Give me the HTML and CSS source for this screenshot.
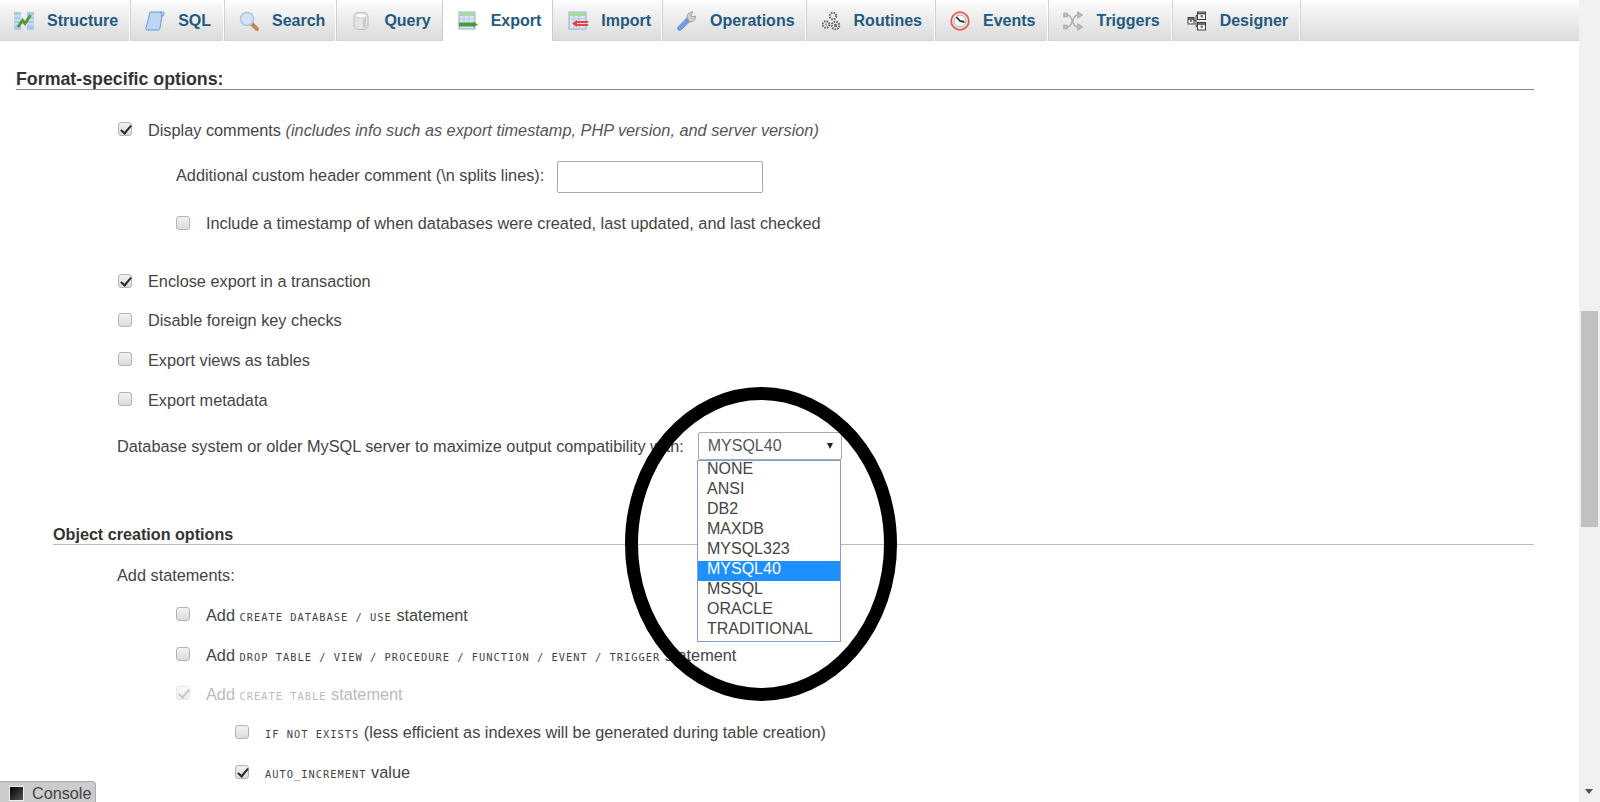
FILE: index.html
```html
<!DOCTYPE html>
<html lang="en">
<head>
<meta charset="utf-8">
<title>Export</title>
<link rel="stylesheet" href="styles.css">
</head>
<body>
<div class="page">
  <main class="main">
    <nav class="tabs">
      <a class="tab t-structure"><svg class="ico" viewBox="0 0 20 20"><rect x="0" y="1" width="7" height="18" fill="#a9c8ea"/><rect x="13" y="1" width="7" height="18" fill="#a9c8ea"/><path d="M0 5h7M0 9h7M0 13h7M13 5h7M13 9h7M13 13h7" stroke="#eef4fb"/><path d="M4 16 8.500 9.500l2.500 3L16.500 4" fill="none" stroke="#4c9a3c" stroke-width="3"/></svg>Structure</a>
      <a class="tab t-sql"><svg class="ico" viewBox="0 0 20 20"><path d="M5 1h13c1.500 0 1.500 3 0 4h-1l-2 12c-.3 1.500-1 2-2 2H2C.5 19 .5 16 1.500 15.500Z" fill="#bcd5f2" stroke="#6a98cf"/><path d="M15 1c1.500 0 2 2 1.500 4H18" fill="none" stroke="#6a98cf"/></svg>SQL</a>
      <a class="tab t-search"><svg class="ico" viewBox="0 0 20 20"><path d="m12.500 12.500 5.500 5.500" stroke="#c08a50" stroke-width="4" stroke-linecap="round"/><circle cx="8" cy="8" r="6.500" fill="#d3e3f6" stroke="#a9c4e6" stroke-width="1.500"/></svg>Search</a>
      <a class="tab t-query"><svg class="ico" viewBox="0 0 20 20"><rect x="3" y="1.500" width="14" height="17" rx="4.500" fill="#e5e5e5" stroke="#bdbdbd"/><ellipse cx="10" cy="4.500" rx="6" ry="2.500" fill="#f8f8f8" stroke="#cfcfcf"/><rect x="12" y="7" width="3" height="9.500" fill="#cbcbcb"/></svg>Query</a>
      <a class="tab t-export active"><svg class="ico" viewBox="0 0 20 20"><rect x="1" y="1" width="16" height="17" fill="#dbe6f4" stroke="#8fadd2"/><rect x="2" y="2" width="14" height="3" fill="#a6dc92"/><path d="M2 8h14M6 5v8M11 5v8" stroke="#b5cae3"/><rect x="1" y="11.500" width="15" height="4" fill="#4c9a3c"/><path d="m15 10.500 5 3-5 3z" fill="#4c9a3c"/></svg>Export</a>
      <a class="tab t-import"><svg class="ico" viewBox="0 0 20 20"><rect x="1" y="1" width="17" height="17" fill="#dbe6f4" stroke="#8fadd2"/><rect x="2" y="2" width="15" height="3" fill="#a6dc92"/><path d="M2 8h15M6 5v12M11 5v12" stroke="#b5cae3"/><rect x="8" y="10" width="12" height="2" fill="#e8403a"/><rect x="8" y="13" width="12" height="2" fill="#e8403a"/><path d="m4 12.500 5-3.500v7z" fill="#e8403a"/></svg>Import</a>
      <a class="tab t-operations"><svg class="ico" viewBox="0 0 20 20"><path d="M1 16 10 6.500l3.500 3.500L4 19c-2 1.500-4.500-.5-3-3Z" fill="#6f9fe2" stroke="#4f7fc0" stroke-width=".5"/><path d="M10.500 8c-1.500-3.500 1.500-7.500 5.500-7l-2 3 1 2 3.500-1c.5 4-3.500 7-6.500 5.500Z" fill="#cdcdcd" stroke="#909090" stroke-width=".8"/></svg>Operations</a>
      <a class="tab t-routines"><svg class="ico" viewBox="0 0 20 20" fill="none" stroke="#6a6a6a"><circle cx="12" cy="5" r="3.300" stroke-dasharray="1.600 1" stroke-width="2"/><circle cx="5" cy="13.500" r="3.300" stroke-dasharray="1.600 1" stroke-width="2"/><circle cx="14.500" cy="14.500" r="3.800" stroke-dasharray="1.600 1" stroke-width="2"/><rect x="13" y="13" width="3" height="3" fill="#777" stroke="none"/><rect x="4" y="12.500" width="2" height="2" fill="#999" stroke="none"/></svg>Routines</a>
      <a class="tab t-events"><svg class="ico" viewBox="0 0 20 20"><circle cx="10" cy="10" r="8.800" fill="#f4eeee" stroke="#e8585a" stroke-width="1.800"/><circle cx="10" cy="10" r="6" fill="#fff" stroke="#a8a8a8"/><path d="M6.500 6 10 10l4.500 1" fill="none" stroke="#333" stroke-width="1.800"/></svg>Events</a>
      <a class="tab t-triggers"><svg class="ico" viewBox="0 0 20 20" fill="none" stroke="#b0b0b0" stroke-width="1.600"><path d="M1 4h4c4 0 5 12 9 12h1M1 16h4c4 0 5-12 9-12h1"/><path d="m15 1.500 4 2.500-4 2.500zM15 13.500l4 2.500-4 2.500z" fill="#d4d4d4"/><rect x="1" y="2.500" width="3" height="3" fill="#d4d4d4"/><rect x="1" y="14.500" width="3" height="3" fill="#d4d4d4"/></svg>Triggers</a>
      <a class="tab t-designer"><svg class="ico" viewBox="0 0 20 20" fill="#f4f4f4" stroke="#3f3f3f"><rect x="10.500" y="1" width="8" height="7.500"/><rect x="10.500" y="11.500" width="8" height="7.500"/><rect x="1" y="6.500" width="6" height="6.500"/><path d="M7 9.500h2V4.500h1.500M9 9.500v6h1.500" fill="none"/><path d="M10.500 2.500h8M10.500 13h8M1 8h6" stroke-width="1.500"/><rect x="13.500" y="4" width="2.500" height="2.500" fill="#6d87a8" stroke="none"/><rect x="13.500" y="14.500" width="2.500" height="2.500" fill="#6d87a8" stroke="none"/><rect x="3" y="9" width="2" height="2" fill="#6d87a8" stroke="none"/></svg>Designer</a>
    </nav>

    <section class="content">
      <h2 class="heading">Format-specific options:</h2>

      <div class="opts">
        <label class="row r1"><input type="checkbox" checked><span>Display comments <em>(includes info such as export timestamp, PHP version, and server version)</em></span></label>
        <div class="row r2 lvl1"><span>Additional custom header comment (\n splits lines):</span><input class="text" type="text"></div>
        <label class="row r3 lvl1"><input type="checkbox"><span>Include a timestamp of when databases were created, last updated, and last checked</span></label>
        <label class="row r4"><input type="checkbox" checked><span>Enclose export in a transaction</span></label>
        <label class="row r5"><input type="checkbox"><span>Disable foreign key checks</span></label>
        <label class="row r6"><input type="checkbox"><span>Export views as tables</span></label>
        <label class="row r7"><input type="checkbox"><span>Export metadata</span></label>
        <div class="row r8"><span class="compat">Database system or older MySQL server to maximize output compatibility with:</span><span class="select">MYSQL40<i class="caret"></i></span></div>
      </div>

      <h3 class="subheading">Object creation options</h3>

      <div class="opts">
        <div class="row r9"><span class="compat">Add statements:</span></div>
        <label class="row r10 lvl1"><input type="checkbox"><span>Add <code>CREATE DATABASE / USE</code> statement</span></label>
        <label class="row r11 lvl1"><input type="checkbox"><span>Add <code>DROP TABLE / VIEW / PROCEDURE / FUNCTION / EVENT / TRIGGER</code> statement</span></label>
        <label class="row r12 lvl1 off"><input type="checkbox" checked disabled><span>Add <code>CREATE TABLE</code> statement</span></label>
        <label class="row r13 lvl2"><input type="checkbox"><span><code>IF NOT EXISTS</code> (less efficient as indexes will be generated during table creation)</span></label>
        <label class="row r14 lvl2"><input type="checkbox" checked><span><code>AUTO_INCREMENT</code> value</span></label>
      </div>
    </section>
  </main>

  <aside class="scrollbar"><div class="thumb"></div><i class="down"></i></aside>
</div>

<ul class="dropdown">
  <li>NONE</li><li>ANSI</li><li>DB2</li><li>MAXDB</li><li>MYSQL323</li><li class="sel">MYSQL40</li><li>MSSQL</li><li>ORACLE</li><li>TRADITIONAL</li>
</ul>

<svg class="ring" viewBox="0 0 272 314"><ellipse cx="136" cy="157" rx="129.500" ry="150.500"/></svg>

<div class="console"><i class="console-ico"></i>Console</div>
</body>
</html>
```
FILE: styles.css
```css
* { box-sizing: border-box; }
html, body { margin: 0; height: 100%; overflow: hidden; background: #fff; }
body { font-family: "Liberation Sans", Arial, sans-serif; font-size: 16.3px; color: #444; position: relative; }

.page { display: flex; height: 802px; }
.main { flex: 1; min-width: 0; overflow: hidden; }

.tabs { display: flex; height: 41px; background: linear-gradient(#fff, #f3f3f3 25%, #dcdcdc); border-bottom: 1px solid #d4d4d4; }
.tab { display: flex; align-items: center; gap: 13px; height: 41px; padding: 0 11px 0 15px; font-weight: bold; font-size: 16px; color: #235a81; border-right: 1px solid #fff; box-shadow: 1px 0 0 #d0d0d0; white-space: nowrap; }
.tab.t-structure { padding: 0 11px 0 14px; }
.tab.t-sql { padding-right: 12px; }
.tab.t-search, .tab.t-import, .tab.t-operations { padding-right: 10px; }
.tab.t-routines, .tab.t-events { padding-right: 12px; }
.tab.active { margin-left: -1px; background: #fff; border-left: 1px solid #ccc; border-right: 1px solid #ccc; box-shadow: none; }
.ico { width: 20px; height: 20px; flex: none; filter: blur(.3px); }

.content { padding-left: 16px; }
.heading { margin: 26px 45px 0 0; height: 23px; padding-top: 2px; line-height: 21px; font-size: 17.8px; font-weight: bold; color: #333; border-bottom: 1px solid #888; }
.subheading { margin: 51px 45px 0 37px; height: 22px; line-height: 22px; font-size: 16.15px; font-weight: bold; color: #333; border-bottom: 1px solid #bbb; }

.opts { padding-left: 102px; }
.row { display: flex; align-items: center; height: 39.500px; white-space: nowrap; }
.row input[type=checkbox] { margin: 0 16px 0 0; }
.lvl1 { margin-left: 58px; }
.lvl2 { margin-left: 117px; }
.off { color: #bbb; }
em { color: #555; }
.compat { margin-left: -1px; }

.r1 { margin-top: 20px; height: 40px; }
.r2 { height: 51px; }
.r3 { height: 45px; }
.r4 { margin-top: 16px; height: 39px; }
.r5 { height: 39px; }
.r6, .r7 { height: 40px; }
.r8 { height: 52px; }
.r9 { margin-top: 11px; height: 39px; }
.r10, .r11 { height: 40px; }
.r12 { height: 38px; }
.r13 { height: 39px; }
.r14 { height: 41px; }

input[type=checkbox] { appearance: none; width: 14px; height: 14px; flex: none; position: relative; top: -1px; border: 1px solid #b4b4b4; border-radius: 3px; background: linear-gradient(#f2f2f2, #dcdcdc); }
input[type=checkbox]:checked::after { content: ""; position: absolute; left: 4px; top: 0; width: 4px; height: 9px; border: solid #2a2a2a; border-width: 0 2.500px 2.500px 0; transform: rotate(40deg); }
input[type=checkbox]:disabled { opacity: .45; border-color: #ccc; }
input[type=checkbox]:disabled:checked::after { border-color: #888; }

.text { width: 206px; height: 32px; margin: 3px 0 0 13px; border: 1px solid #aaa; border-radius: 2px; background: #fff; }

code { font-family: "DejaVu Sans Mono", monospace; font-size: 10.400px; letter-spacing: 1px; color: #444; }
.off code { color: #bbb; }

.select { position: relative; display: flex; align-items: center; width: 144px; height: 28px; margin-left: 14px; padding-left: 9px; border: 1px solid #a9a9a9; border-radius: 2px; color: #555; font-size: 16px; }
.caret { position: absolute; right: 8px; top: 10px; border: 3.500px solid transparent; border-top: 6px solid #222; border-bottom: 0; }

.dropdown { position: absolute; left: 697px; top: 460px; width: 144px; height: 182px; margin: 0; padding: 0; list-style: none; background: #fff; border: 1px solid #7e9fd8; font-size: 16px; color: #444; }
.dropdown li { height: 20px; line-height: 16px; padding-left: 9px; }
.dropdown .sel { background: #1e90ff; color: #fff; }

.ring { position: absolute; left: 625px; top: 387px; width: 272px; height: 314px; }
.ring ellipse { fill: none; stroke: #000; stroke-width: 13px; }

.scrollbar { position: relative; flex: none; width: 21px; background: #f1f1f1; }
.thumb { position: absolute; left: 2px; right: 2px; top: 311px; height: 216px; background: #c1c1c1; }
.down { position: absolute; left: 6px; top: 789px; border: 4.500px solid transparent; border-top: 5px solid #505050; border-bottom: 0; }

.console { position: absolute; left: 0; bottom: 0; display: flex; align-items: center; gap: 8px; width: 96px; height: 21px; padding: 2px 0 0 9px; background: #ccc; border: 1px solid #aaa; border-width: 1px 1px 0 0; border-top-right-radius: 4px; font-size: 16.2px; color: #444; }
.console-ico { width: 15px; height: 15px; border: 1px solid #eee; background: linear-gradient(135deg, #000, #555); }
```
